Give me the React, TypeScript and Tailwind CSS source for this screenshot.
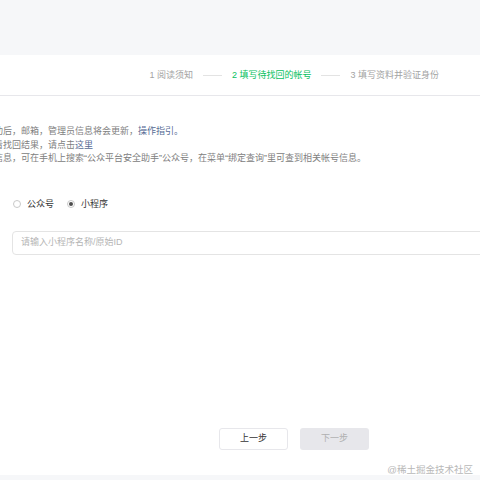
const font = {
  fontFamily: '"Liberation Sans", "Noto Sans CJK SC", sans-serif',
};

function Steps() {
  return (
    <div className="flex h-[41px] items-center justify-end gap-[10px] border-b border-[#e7e7eb] pr-[41px] text-[9px] leading-[13px]">
      <span className="text-[#a3a3a3]">1 阅读须知</span>
      <span className="h-px w-[19px] bg-[#e3e3e3]" />
      <span className="text-[#07c160]">2 填写待找回的帐号</span>
      <span className="h-px w-[19px] bg-[#e3e3e3]" />
      <span className="text-[#a3a3a3]">3 填写资料并验证身份</span>
    </div>
  );
}

function Radio({ label, checked }: { label: string; checked?: boolean }) {
  return (
    <label className="flex items-center gap-[6px]">
      <span className="flex h-[8px] w-[8px] items-center justify-center rounded-full border border-[#c9c9c9] bg-white">
        {checked && <span className="h-[4px] w-[4px] rounded-full bg-[#4d4d4d]" />}
      </span>
      <span className="text-[#353535]">{label}</span>
    </label>
  );
}

export default function App() {
  return (
    <div
      className="relative flex h-[480px] w-[480px] flex-col overflow-hidden bg-white"
      style={font}
    >
      <div className="h-[55px] shrink-0 bg-[#f6f7f9]" />
      <Steps />

      {/* the page is wider than the shot, so the notes start off the left edge */}
      <div className="-ml-[33px] whitespace-nowrap pt-[29px] text-[9px] leading-[13.5px] text-[#808080]">
        <p>
          迁移成功后，邮箱，管理员信息将会更新，
          <a className="text-[#576b95]">操作指引。</a>
        </p>
        <p>
          如需查看找回结果，请点击<a className="text-[#576b95]">这里</a>
        </p>
        <p>的帐号信息，可在手机上搜索“公众平台安全助手”公众号，在菜单“绑定查询”里可查到相关帐号信息。</p>
      </div>

      <div className="ml-[13px] mt-[32px] flex items-center gap-[13px] text-[9px] leading-[13.5px]">
        <Radio label="公众号" />
        <Radio label="小程序" checked />
      </div>

      <div className="ml-[12px] mt-[20px] flex h-[24px] w-[520px] shrink-0 items-center rounded-[4px] border border-[#e4e4e4] px-[8px] text-[9px] text-[#b5b5b5]">
        请输入小程序名称/原始ID
      </div>

      <div className="ml-[219px] mt-[173px] flex gap-[12px] text-[9px]">
        <button className="h-[22px] w-[69px] rounded-[3px] border border-[#e7e7eb] bg-white text-[#353535]">
          上一步
        </button>
        <button className="h-[22px] w-[69px] rounded-[3px] bg-[#e7e7eb] text-[#b0b0b0]">
          下一步
        </button>
      </div>

      <div className="flex-1" />
      <div className="h-[5px] shrink-0 bg-[#f6f7f9]" />

      <span className="absolute right-[7px] top-[463px] text-[9.5px] leading-[13px] text-[#b8b8b8]">
        @稀土掘金技术社区
      </span>
    </div>
  );
}
